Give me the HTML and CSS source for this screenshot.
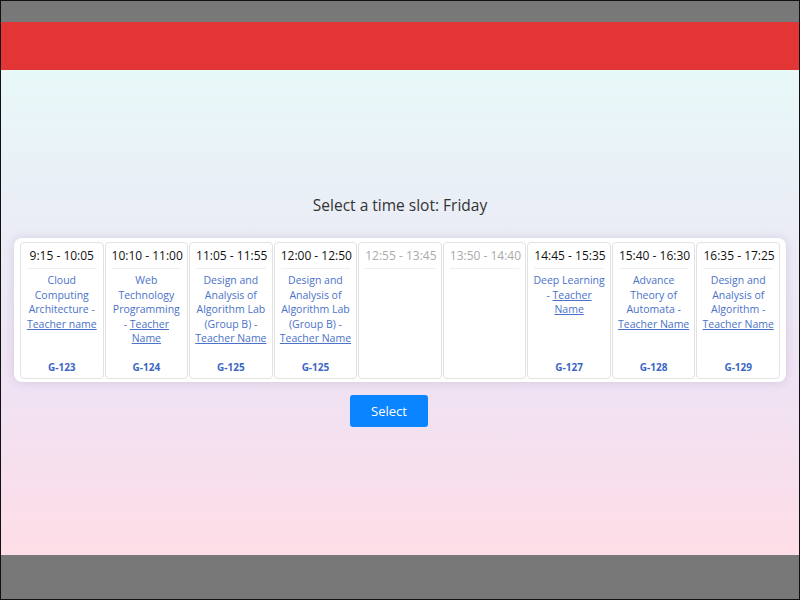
FILE: index.html
```html
<!DOCTYPE html>
<html lang="en">
<head>
<meta charset="utf-8">
<title>Select a time slot</title>
<link rel="stylesheet" href="styles.css">
</head>
<body>
<div class="frame">
  <div class="topbar"></div>
  <header class="header"></header>
  <main class="main">
    <h2 class="title">Select a time slot: Friday</h2>
    <div class="slots">
      <div class="slot">
        <div class="time">9:15 - 10:05</div>
        <div class="subject">Cloud Computing Architecture - <a href="#">Teacher name</a></div>
        <div class="room">G-123</div>
      </div>
      <div class="slot">
        <div class="time">10:10 - 11:00</div>
        <div class="subject">Web Technology Programming -&nbsp;<a href="#">Teacher Name</a></div>
        <div class="room">G-124</div>
      </div>
      <div class="slot">
        <div class="time">11:05 - 11:55</div>
        <div class="subject">Design and Analysis of Algorithm Lab (Group B) - <a href="#">Teacher Name</a></div>
        <div class="room">G-125</div>
      </div>
      <div class="slot">
        <div class="time">12:00 - 12:50</div>
        <div class="subject">Design and Analysis of Algorithm Lab (Group B) - <a href="#">Teacher Name</a></div>
        <div class="room">G-125</div>
      </div>
      <div class="slot slot-empty">
        <div class="time">12:55 - 13:45</div>
      </div>
      <div class="slot slot-empty">
        <div class="time">13:50 - 14:40</div>
      </div>
      <div class="slot">
        <div class="time">14:45 - 15:35</div>
        <div class="subject">Deep Learning -&nbsp;<a href="#">Teacher Name</a></div>
        <div class="room">G-127</div>
      </div>
      <div class="slot">
        <div class="time">15:40 - 16:30</div>
        <div class="subject">Advance Theory of Automata - <a href="#">Teacher Name</a></div>
        <div class="room">G-128</div>
      </div>
      <div class="slot">
        <div class="time">16:35 - 17:25</div>
        <div class="subject">Design and Analysis of Algorithm - <a href="#">Teacher Name</a></div>
        <div class="room">G-129</div>
      </div>
    </div>
    <button class="select-btn" type="button">Select</button>
  </main>
  <footer class="footer"></footer>
</div>
</body>
</html>
```
FILE: styles.css
```css
* { box-sizing: border-box; }
html, body { margin: 0; padding: 0; }
body {
  font-family: "Open Sans", "Liberation Sans", sans-serif;
  color: #222;
}
.frame {
  width: 800px;
  height: 600px;
  border: 1px solid #111;
  display: flex;
  flex-direction: column;
  overflow: hidden;
}
.topbar {
  height: 21px;
  background: #787878;
  flex: none;
}
.header {
  height: 48px;
  background: #e33535;
  flex: none;
}
.main {
  flex: 1;
  background: linear-gradient(to bottom, #e7f8f8 0%, #ebecf6 35%, #efe2f4 65%, #fedde6 100%);
  display: flex;
  flex-direction: column;
  align-items: center;
  justify-content: center;
  padding: 0 13px 4px;
}
.title {
  margin: 0 0 22px;
  font-size: 15.5px;
  font-weight: 500;
  line-height: 22px;
  color: #333;
}
.slots {
  align-self: stretch;
  background: #fff;
  border-radius: 8px;
  box-shadow: 0 0 10px rgba(60, 40, 90, 0.15);
  padding: 4px 6px 3px;
  display: grid;
  grid-template-columns: repeat(9, minmax(0, 1fr));
  gap: 1px;
}
.slot {
  border: 1px solid #e2e2e2;
  border-radius: 4px;
  padding: 0 5px 4px;
  height: 137px;
  display: flex;
  flex-direction: column;
  text-align: center;
  min-width: 0;
}
.time {
  font-size: 12px;
  line-height: 18px;
  padding: 4px 0 3px;
  margin: 0 1px;
  border-bottom: 1px solid #eee;
  color: #111;
  white-space: nowrap;
}
.slot-empty .time { color: #aaa; }
.subject {
  margin-top: 4px;
  font-size: 10.5px;
  line-height: 14.5px;
  color: #4a72c9;
}
.subject a { color: #4a72c9; text-decoration: underline; }
.room {
  margin-top: auto;
  font-size: 10px;
  line-height: 14px;
  font-weight: 700;
  color: #3a66c4;
}
.select-btn {
  margin: 13px 22px 0 0;
  width: 78px;
  height: 32px;
  border: none;
  border-radius: 3px;
  background: #0a84ff;
  color: #fff;
  font-family: inherit;
  font-size: 13px;
  cursor: pointer;
}
.footer {
  height: 44px;
  background: #787878;
  flex: none;
}
```
